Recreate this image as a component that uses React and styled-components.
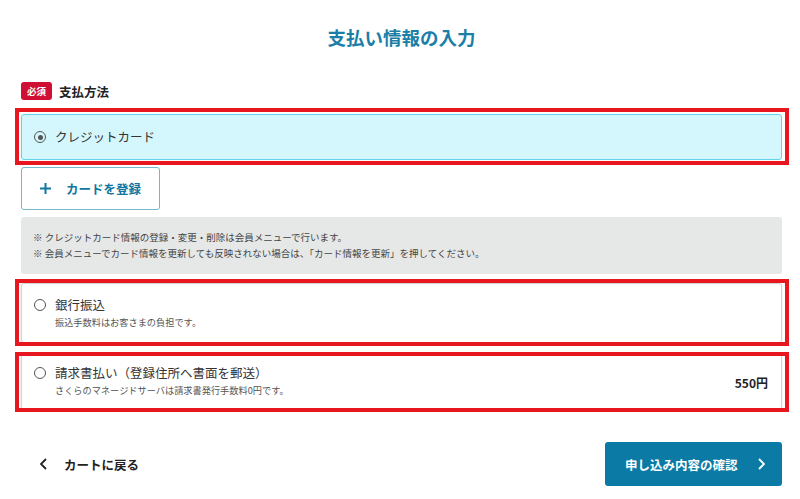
import React from 'react';
import styled, { createGlobalStyle, css } from 'styled-components';

const GlobalStyle = createGlobalStyle`
  html, body {
    margin: 0;
    padding: 0;
    background: #fff;
  }
  body {
    font-family: "Noto Sans CJK JP", "Noto Sans", "Liberation Sans", sans-serif;
    color: #333;
  }
`;

const Page = styled.div`
  width: 800px;
  box-sizing: border-box;
  padding: 0 18px 0 21px;
`;

const Title = styled.h1`
  margin: 0;
  padding-top: 27px;
  line-height: 20px;
  font-size: 18.5px;
  font-weight: 700;
  text-align: center;
  color: #1a7ea7;
`;

const LabelRow = styled.div`
  display: flex;
  align-items: center;
  gap: 7px;
  height: 18px;
  margin-top: 35px;
`;

const Badge = styled.span`
  display: inline-flex;
  align-items: center;
  justify-content: center;
  width: 31px;
  height: 18px;
  border-radius: 3px;
  background: #cf0f34;
  color: #fff;
  font-size: 9.5px;
  font-weight: 700;
`;

const Label = styled.span`
  font-size: 12.5px;
  font-weight: 700;
  color: #222;
`;

// red frame drawn over the option cards
const framed = css`
  &::after {
    content: '';
    position: absolute;
    inset: ${p => p.$frame};
    border: 4px solid #e8161f;
    pointer-events: none;
  }
`;

const OptionCard = styled.div`
  position: relative;
  box-sizing: border-box;
  height: ${p => p.$h}px;
  margin-top: ${p => p.$mt}px;
  border-radius: 3px;
  border: 1px solid ${p => (p.$active ? '#66d3ed' : '#d4d4d4')};
  background: ${p => (p.$active ? '#d3f7fc' : '#fff')};
  box-shadow: ${p => (p.$active ? 'none' : '0 0 2px rgba(0, 0, 0, 0.12)')};
  display: flex;
  align-items: ${p => (p.$top ? 'flex-start' : 'center')};
  padding: ${p => p.$top || 0}px 13px 0 12px;
  ${p => p.$frame && framed}
`;

const OptionMain = styled.div`
  flex: 1;
`;

const OptionHead = styled.div`
  display: flex;
  align-items: center;
  gap: 9px;
  line-height: 18px;
  font-size: 12.5px;
  color: #333;
`;

const Radio = styled.span`
  box-sizing: border-box;
  width: 12px;
  height: 12px;
  border-radius: 50%;
  border: 1.5px solid #555;
  display: inline-flex;
  align-items: center;
  justify-content: center;
  flex-shrink: 0;
  &::before {
    content: '';
    width: 5px;
    height: 5px;
    border-radius: 50%;
    background: ${p => (p.$checked ? '#555' : 'transparent')};
  }
`;

const OptionNote = styled.div`
  margin: 1px 0 0 21px;
  line-height: 14px;
  font-size: 9.2px;
  color: #555;
`;

const Price = styled.span`
  align-self: center;
  margin-top: -${p => p.$shift}px;
  font-size: 12px;
  font-weight: 700;
  color: #222;
`;

const RegisterButton = styled.button`
  box-sizing: border-box;
  width: 139px;
  height: 43px;
  margin-top: 7px;
  padding: 0 0 0 18px;
  display: flex;
  align-items: center;
  gap: 15px;
  border: 1px solid #79b6cc;
  border-radius: 3px;
  background: #fff;
  color: #0f77a0;
  font-family: inherit;
  font-size: 12.5px;
  font-weight: 700;
`;

const Notice = styled.div`
  margin-top: 7px;
  padding: 12px 12px 13px;
  border-radius: 3px;
  background: #e6e7e7;
  font-size: 9.5px;
  line-height: 16px;
  color: #444;
  p {
    margin: 0;
  }
`;

const Footer = styled.div`
  margin-top: 32px;
  display: flex;
  align-items: center;
  justify-content: space-between;
`;

const BackLink = styled.a`
  display: flex;
  align-items: center;
  gap: 17px;
  padding-left: 19px;
  font-size: 12.5px;
  font-weight: 700;
  color: #222;
  text-decoration: none;
`;

const ConfirmButton = styled.button`
  box-sizing: border-box;
  width: 177px;
  height: 44px;
  padding: 0 0 0 20px;
  display: flex;
  align-items: center;
  gap: 20px;
  border: none;
  border-radius: 3px;
  background: #0b7aa5;
  color: #fff;
  font-family: inherit;
  font-size: 12.5px;
  font-weight: 700;
`;

const Chevron = ({ dir = 'right', color = '#222' }) => (
  <svg width="7" height="12" viewBox="0 0 7 12" fill="none">
    <path
      d={dir === 'right' ? 'M1 1l5 5-5 5' : 'M6 1L1 6l5 5'}
      stroke={color}
      strokeWidth="1.8"
    />
  </svg>
);

const PlusIcon = () => (
  <svg width="11" height="11" viewBox="0 0 11 11">
    <path d="M5.5 0v11M0 5.5h11" stroke="#0f77a0" strokeWidth="2" />
  </svg>
);

export default function App() {
  return (
    <Page>
      <GlobalStyle />
      <Title>支払い情報の入力</Title>

      <LabelRow>
        <Badge>必須</Badge>
        <Label>支払方法</Label>
      </LabelRow>

      <OptionCard $active $h={46} $mt={14} $frame="-7px -8px -6px -7px">
        <OptionHead>
          <Radio $checked />
          クレジットカード
        </OptionHead>
      </OptionCard>

      <RegisterButton>
        <PlusIcon />
        カードを登録
      </RegisterButton>

      <Notice>
        <p>※ クレジットカード情報の登録・変更・削除は会員メニューで行います。</p>
        <p>
          ※ 会員メニューでカード情報を更新しても反映されない場合は、「カード情報を更新」を押してください。
        </p>
      </Notice>

      <OptionCard $h={60} $mt={9} $top={12} $frame="-5px -8px -4px -7px">
        <OptionMain>
          <OptionHead>
            <Radio />
            銀行振込
          </OptionHead>
          <OptionNote>振込手数料はお客さまの負担です。</OptionNote>
        </OptionMain>
      </OptionCard>

      <OptionCard $h={56} $mt={11} $top={9} $frame="-3px -8px -3px -7px">
        <OptionMain>
          <OptionHead>
            <Radio />
            請求書払い（登録住所へ書面を郵送）
          </OptionHead>
          <OptionNote>さくらのマネージドサーバは請求書発行手数料0円です。</OptionNote>
        </OptionMain>
        <Price $shift={9}>550円</Price>
      </OptionCard>

      <Footer>
        <BackLink href="#">
          <Chevron dir="left" />
          カートに戻る
        </BackLink>
        <ConfirmButton>
          申し込み内容の確認
          <Chevron color="#fff" />
        </ConfirmButton>
      </Footer>
    </Page>
  );
}
